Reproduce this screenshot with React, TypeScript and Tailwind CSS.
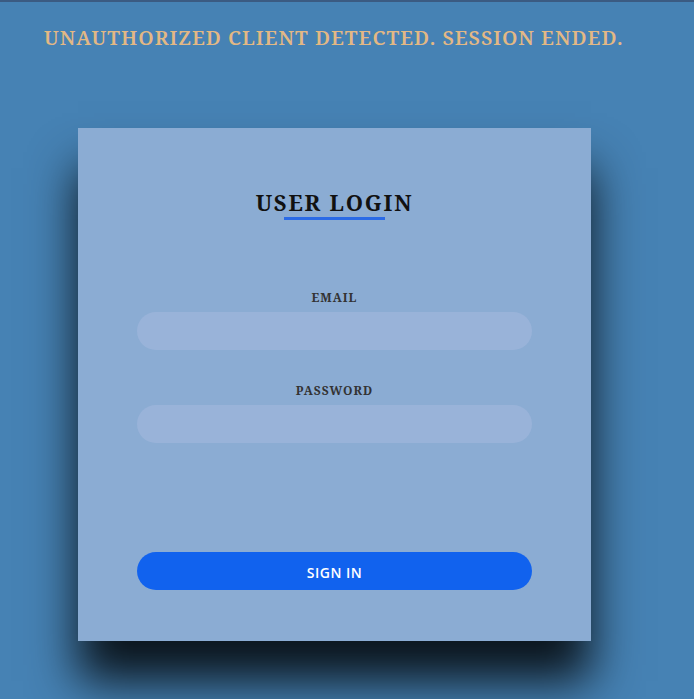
export default function App() {
  return (
    <div className="min-h-[699px] bg-[#4682b4] border-t-2 border-[#3b5b82] font-['Noto_Serif','DejaVu_Serif',serif]">
      {/* Alert */}
      <p className="pt-[22px] pl-[44px] text-[20px] leading-[28px] font-semibold text-[#e3b884] tracking-[1px]">
        UNAUTHORIZED CLIENT DETECTED. SESSION ENDED.
      </p>

      {/* Login card */}
      <div className="ml-[78px] mt-[76px] w-[513px] h-[513px] bg-[#8bacd3] shadow-[0_40px_45px_rgba(0,0,0,0.85)] flex flex-col items-center px-[59px]">
        <h1 className="mt-[60px] text-[22px] leading-[28px] font-bold tracking-[1.8px] text-[#111]">
          USER LOGIN
        </h1>
        <div className="mt-[1px] w-[101px] h-[3px] bg-[#2a6ae6]" />

        <label className="mt-[69px] text-[12px] font-bold tracking-[1px] text-[#333]">
          EMAIL
        </label>
        <input
          type="email"
          className="mt-[5px] w-full h-[38px] rounded-full bg-[#99b3d9] outline-none px-4"
        />

        <label className="mt-[32px] text-[12px] font-bold tracking-[1px] text-[#333]">
          PASSWORD
        </label>
        <input
          type="password"
          className="mt-[5px] w-full h-[38px] rounded-full bg-[#99b3d9] outline-none px-4"
        />

        <button className="mt-[109px] w-full h-[38px] pt-[2px] rounded-full bg-[#1162ee] text-white text-[14px] font-semibold tracking-[0.5px] font-['Open_Sans',sans-serif]">
          SIGN IN
        </button>
      </div>
    </div>
  );
}
